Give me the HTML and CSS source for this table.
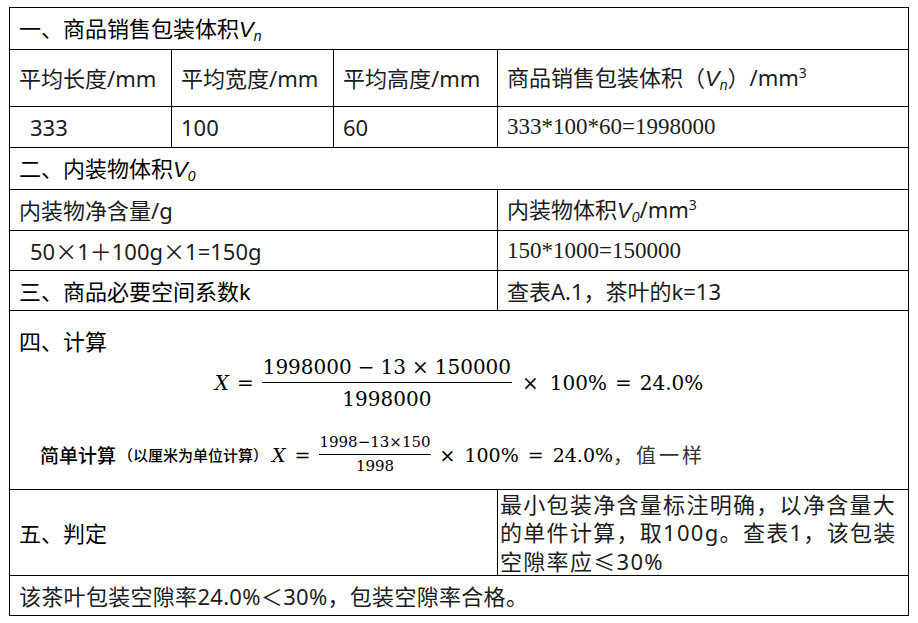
FILE: index.html
```html
<!DOCTYPE html>
<html lang="zh-CN">
<head>
<meta charset="utf-8">
<title>包装空隙率计算</title>
<link rel="stylesheet" href="styles.css">
</head>
<body>
<table class="sheet">
  <colgroup><col class="c1"><col class="c2"><col class="c3"><col class="c4"></colgroup>
  <tr class="r-title">
    <td colspan="4" class="head">一、商品销售包装体积<i class="v">V</i><sub class="sb">n</sub></td>
  </tr>
  <tr class="r-label">
    <td>平均长度/mm</td>
    <td>平均宽度/mm</td>
    <td>平均高度/mm</td>
    <td>商品销售包装体积（<i class="v">V</i><sub class="sb">n</sub>）/mm<sup class="sp">3</sup></td>
  </tr>
  <tr class="r-val">
    <td class="ind">333</td>
    <td>100</td>
    <td>60</td>
    <td class="serif">333*100*60=1998000</td>
  </tr>
  <tr class="r-title2">
    <td colspan="4" class="head">二、内装物体积<i class="v">V</i><sub class="sb">0</sub></td>
  </tr>
  <tr class="r-row">
    <td colspan="3">内装物净含量/g</td>
    <td>内装物体积<i class="v">V</i><sub class="sb">0</sub>/mm<sup class="sp">3</sup></td>
  </tr>
  <tr class="r-row2">
    <td colspan="3" class="ind">50<span class="fw">×</span>1＋100g<span class="fw">×</span>1=150g</td>
    <td class="serif">150*1000=150000</td>
  </tr>
  <tr class="r-row2">
    <td colspan="3" class="head">三、商品必要空间系数k</td>
    <td>查表A.1，茶叶的k=13</td>
  </tr>
  <tr class="r-calc">
    <td colspan="4" class="calc">
      <div class="calc-title head">四、计算</div>
      <div class="eq eq-big">
        <i class="mx">X</i><span class="op">=</span>
        <span class="frac">
          <span class="num">1998000<span class="op">−</span>13<span class="op">×</span>150000</span>
          <span class="den">1998000</span>
        </span>
        <span class="op op-x">×</span><span>100%</span><span class="op">=</span><span>24.0%</span>
      </div>
      <div class="eq eq-small">
        <span class="lbl">简单计算</span><span class="note">（以厘米为单位计算）</span><i class="mx">X</i><span class="op">=</span>
        <span class="frac frac-sm">
          <span class="num">1998−13×150</span>
          <span class="den">1998</span>
        </span>
        <span class="op">×</span><span>100%</span><span class="op">=</span><span>24.0%</span><span class="cn">，值一样</span>
      </div>
    </td>
  </tr>
  <tr class="r-judge">
    <td colspan="3" class="head">五、判定</td>
    <td class="para">最小包装净含量标注明确，以净含量大<br>的单件计算，取100g。查表1，该包装<br>空隙率应<span class="fw">≤</span>30%</td>
  </tr>
  <tr class="r-row2">
    <td colspan="4" class="wide">该茶叶包装空隙率24.0%＜30%，包装空隙率合格。</td>
  </tr>
</table>
</body>
</html>
```

FILE: styles.css
```css
html, body {
  margin: 0;
  padding: 0;
  background: #fff;
}
body {
  padding: 7px 0 0 9px;
  font-family: "Noto Sans", "Noto Sans CJK SC", sans-serif;
  color: #1c1c1c;
}
.sheet {
  border-collapse: collapse;
  table-layout: fixed;
  width: 899px;
  font-size: 22px;
}
.c1 { width: 162px; }
.c2 { width: 162px; }
.c3 { width: 164px; }
.c4 { width: 411px; }

.sheet td {
  border: 1px solid #000;
  padding: 0 0 0 9px;
  vertical-align: middle;
  line-height: 28px;
  white-space: nowrap;
}
.r-title { height: 42px; }
.r-label { height: 57px; }
.r-val { height: 41px; }
.r-title2 { height: 42px; }
.r-row { height: 41px; }
.r-row2 { height: 40px; }
.r-calc { height: 179px; }
.r-judge { height: 84px; }

.head { color: #000; }
.ind { padding-left: 20px !important; }
.fw { font-family: "Noto Sans CJK SC", sans-serif; }
.serif {
  font-family: "Liberation Serif", serif;
  font-size: 23px;
}
.v {
  font-family: "Liberation Sans", sans-serif;
  font-style: italic;
}
.sb {
  font-family: "Liberation Sans", sans-serif;
  font-style: italic;
  font-size: 14px;
  vertical-align: -4px;
  line-height: 0;
}
.sp {
  font-size: 14px;
  vertical-align: 8px;
  line-height: 0;
}

.calc {
  vertical-align: top !important;
  padding: 16px 9px 0 9px !important;
}
.calc-title {
  line-height: 28px;
  font-size: 22px;
}
.eq {
  display: flex;
  align-items: center;
  font-family: "DejaVu Serif", serif;
  color: #000;
}
.eq-big {
  justify-content: center;
  font-size: 20px;
  margin-top: 1px;
}
.mx { font-style: italic; }
.op { margin: 0 8px; }
.num .op { margin: 0 6px; }
.op-x { margin: 0 11px 0 10px; }
.frac {
  display: inline-flex;
  flex-direction: column;
  align-items: center;
}
.frac .num {
  line-height: 22px;
  padding: 0 1px 4px;
  border-bottom: 1.5px solid #000;
}
.frac .den {
  line-height: 22px;
  padding-top: 5px;
}
.eq-small {
  margin: 24px 0 0 21px;
  font-size: 19px;
}
.lbl {
  font-family: "Noto Sans CJK SC", sans-serif;
  font-size: 19px;
  font-weight: 500;
}
.note {
  font-family: "Noto Sans CJK SC", sans-serif;
  font-size: 15px;
  font-weight: 500;
  margin: 0 4px 0 2px;
}
.frac-sm { font-size: 15px; }
.frac-sm .num {
  line-height: 17px;
  padding: 0 0 3px;
  border-bottom-width: 1px;
}
.frac-sm .den {
  line-height: 17px;
  padding-top: 3px;
}
.eq-small .op { margin: 0 9px; }
.eq-small .num .op, .frac-sm .num { margin: 0; }
.cn {
  font-family: "Noto Sans CJK SC", sans-serif;
  font-size: 20px;
  letter-spacing: 3px;
  color: #333;
}

.para {
  padding-left: 2px !important;
  line-height: 28px;
  letter-spacing: 1.3px;
  font-size: 22px;
}
.wide { letter-spacing: 0.3px; }
```
